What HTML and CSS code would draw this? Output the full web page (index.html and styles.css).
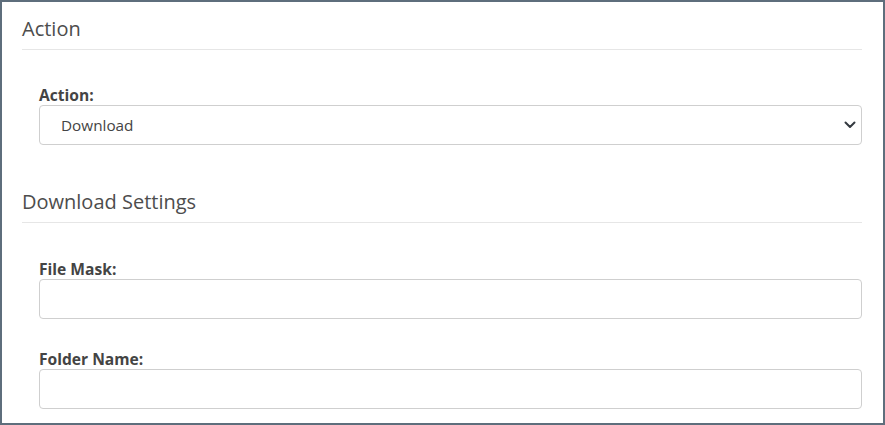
FILE: index.html
```html
<!DOCTYPE html>
<html lang="en">
<head>
  <meta charset="UTF-8" />
  <meta name="viewport" content="width=device-width, initial-scale=1.0"/>
  <title>Action Settings</title>
  <link rel="stylesheet" href="styles.css">
</head>
<body>

  <div class="panel">
    <div class="section">
      <h3 class="section-title">Action</h3>
      <div class="field">
        <label for="action">Action:</label>
        <div class="select-wrap">
          <select id="action" class="control">
            <option>Download</option>
            <option>Upload</option>
          </select>
          <svg class="chevron" width="12" height="8" viewBox="0 0 12 8">
            <path d="M1.5 1.5 L6 6 L10.5 1.5" fill="none" stroke="#343a40" stroke-width="2" stroke-linecap="round" stroke-linejoin="round"/>
          </svg>
        </div>
      </div>
    </div>

    <div class="section">
      <h3 class="section-title">Download Settings</h3>
      <div class="field">
        <label for="fileMask">File Mask:</label>
        <input type="text" id="fileMask" class="control">
      </div>
      <div class="field">
        <label for="folderName">Folder Name:</label>
        <input type="text" id="folderName" class="control">
      </div>
    </div>
  </div>

</body>
</html>
```

FILE: styles.css
```css
html, body {
  margin: 0;
  padding: 0;
}

body {
  font-family: 'Open Sans', 'Noto Sans', sans-serif;
  color: #444;
  background: #fff;
}

.panel {
  box-sizing: border-box;
  width: 885px;
  height: 425px;
  border: 2px solid #5e6e7c;
  padding: 15px 21px 0 20px;
  overflow: hidden;
}

.section-title {
  margin: 0;
  padding-bottom: 8px;
  border-bottom: 1px solid #e6e6e6;
  font-size: 20px;
  line-height: 24px;
  font-weight: 400;
  color: #4d4d4d;
}

.section + .section {
  margin-top: 45px;
}

.field {
  margin: 35px 0 0 17px;
}

.section + .section .field:first-of-type {
  margin-top: 36px;
}

.field + .field {
  margin-top: 30px;
}

.field label {
  display: block;
  font-size: 15.6px;
  line-height: 20px;
  font-weight: 700;
  color: #444;
}

.control {
  display: block;
  box-sizing: border-box;
  width: 100%;
  height: 40px;
  margin: 0;
  padding: 0 12px;
  border: 1px solid #cfcfcf;
  border-radius: 4px;
  background: #fff;
  font-family: inherit;
  font-size: 15.3px;
  color: #444;
  outline: none;
}

.select-wrap {
  position: relative;
}

select.control {
  appearance: none;
  -webkit-appearance: none;
  padding-left: 21px;
}

.chevron {
  position: absolute;
  right: 6px;
  top: 16px;
  pointer-events: none;
}
```
